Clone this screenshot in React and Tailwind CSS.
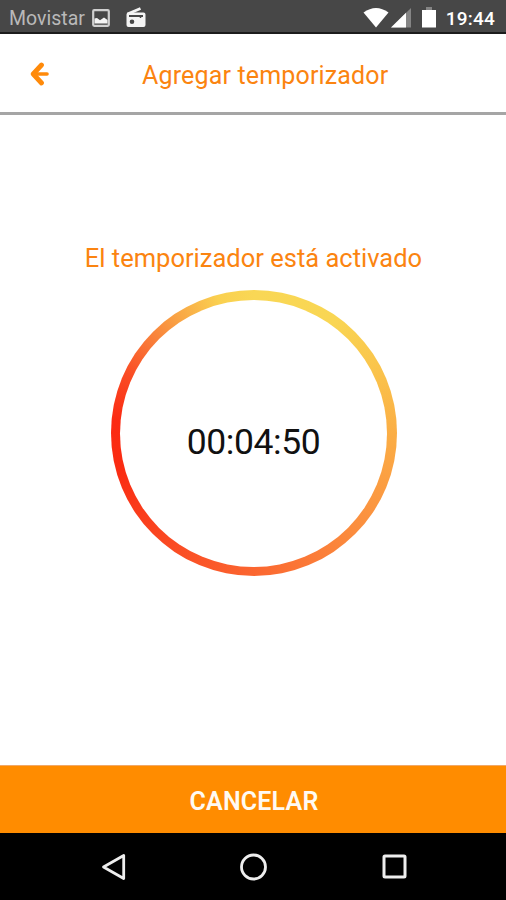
import React from "react";

const StatusBar = () => (
  <div className="h-[34px] shrink-0 bg-[#474747] border-b-2 border-[#1c1c1c] flex items-center pl-[9px] pr-[11px] pt-[3px]">
    <span className="text-[19.5px] leading-none text-[#b9b9b9] pt-[2px]">Movistar</span>

    {/* Picture notification */}
    <svg className="ml-[7px] w-[18px] h-[18px]" viewBox="0 0 18 18">
      <rect x="1.2" y="1.2" width="15.6" height="15.6" rx="1" fill="none" stroke="#d0d0d0" strokeWidth="2.2" />
      <path d="M2.5 14.5V9.5L5 9L8 11.2L12 8.5L15.5 11V14.5Z" fill="#f4f4f4" />
    </svg>

    {/* Radio notification */}
    <svg className="ml-[16px] w-[20px] h-[21px]" viewBox="0 0 20 21">
      <path d="M1.5 7L14.5 1.5" stroke="#f4f4f4" strokeWidth="2.8" />
      <path
        fillRule="evenodd"
        fill="#f4f4f4"
        d="M2.5 5.5H17.5Q19.5 5.5 19.5 7.5V18Q19.5 20 17.5 20H2.5Q.5 20 .5 18V7.5Q.5 5.5 2.5 5.5ZM3 8V10H17V8ZM6 12.4A2.3 2.3 0 1 0 6 17A2.3 2.3 0 1 0 6 12.4Z"
      />
      <path d="M14.5 8V11" stroke="#474747" strokeWidth="1.5" />
    </svg>

    <div className="ml-auto flex items-center">
      <svg className="w-[26px] h-5" viewBox="0 0 26 20">
        <path d="M.5 4.5Q13-4.5 25.5 4.5L13 19.5Z" fill="#fff" />
      </svg>
      <svg className="ml-[2px] w-5 h-5" viewBox="0 0 20 20">
        <path d="M0 19.5L20 0V19.5Z" fill="#858585" />
        <path d="M0 19.5L15 4.8V19.5Z" fill="#fff" />
      </svg>
      <svg className="ml-[11px] w-[14px] h-[21px]" viewBox="0 0 14 21">
        <rect x="4" y="0" width="6" height="3" fill="#858585" />
        <rect x="0" y="3" width="14" height="17.5" fill="#fff" />
      </svg>
      <span className="ml-[10px] pt-px text-[19px] tracking-[0.2px] leading-none font-medium text-white">19:44</span>
    </div>
  </div>
);

const Header = () => (
  <header className="h-[81px] shrink-0 flex items-center border-b-[3px] border-[#a5a5a5] pl-[30px]">
    <button aria-label="Volver" className="w-[19px] pt-px">
      <svg className="w-[19px] h-6" viewBox="0 0 19 24" fill="none" stroke="#ff8a0a" strokeLinecap="round">
        <path d="M11.5 3L3.2 12L11.5 21" strokeWidth="4.8" strokeLinejoin="round" />
        <path d="M4 12H17" strokeWidth="3.6" />
      </svg>
    </button>
    <h1 className="ml-[93px] pt-[4px] text-[25px] tracking-[0.16px] leading-none text-[#fb8410] whitespace-nowrap">
      Agregar temporizador
    </h1>
  </header>
);

const TimerRing = ({ time }) => (
  <div className="mt-[18px] ml-px w-[286px] h-[286px] rounded-full p-[9.5px] bg-[conic-gradient(#f9d755_0deg,#f9d653_35deg,#fac24b_65deg,#fbaa44_95deg,#fb8c3e_135deg,#fb6630_180deg,#fa4822_220deg,#fa2c12_255deg,#fb2a12_275deg,#fa4c24_295deg,#f97a38_311deg,#f9a846_328deg,#fad050_345deg,#f9d755_360deg)]">
    <div className="w-full h-full rounded-full bg-white flex items-center justify-center pt-[19px]">
      <span className="text-[35.5px] tracking-[-0.4px] leading-none text-[#111]">{time}</span>
    </div>
  </div>
);

const NavBar = () => (
  <nav className="h-[67px] shrink-0 bg-black flex items-center justify-between pl-[101px] pr-[99px]">
    <svg className="w-[25px] h-[28px]" viewBox="0 0 25 28" fill="none" stroke="#eee" strokeWidth="2.8">
      <path d="M22.7 2.5V25.5L2.5 14Z" strokeLinejoin="round" />
    </svg>
    <svg className="w-[28px] h-[28px]" viewBox="0 0 28 28" fill="none" stroke="#eee" strokeWidth="2.8">
      <circle cx="13.5" cy="14" r="12" />
    </svg>
    <svg className="w-[25px] h-[25px]" viewBox="0 0 25 25" fill="none" stroke="#eee" strokeWidth="3">
      <rect x="2" y="2" width="21" height="21" rx="1" />
    </svg>
  </nav>
);

const App = () => {
  return (
    <div className="w-full h-screen flex flex-col bg-white overflow-hidden font-[Roboto,sans-serif]">
      <StatusBar />
      <Header />

      <main className="flex-1 flex flex-col items-center pt-[129px]">
        <p className="pl-px text-[25.5px] leading-[28px] text-[#fb8410] whitespace-nowrap">El temporizador está activado</p>
        <TimerRing time="00:04:50" />
      </main>

      <button className="h-[68px] shrink-0 bg-[#ff8c00] border-t border-[#f0a868] text-[25px] tracking-[0.2px] leading-none font-semibold text-[#fffaf2] pt-[3px] pl-[2px]">
        CANCELAR
      </button>
      <NavBar />
    </div>
  );
};

export default App;
